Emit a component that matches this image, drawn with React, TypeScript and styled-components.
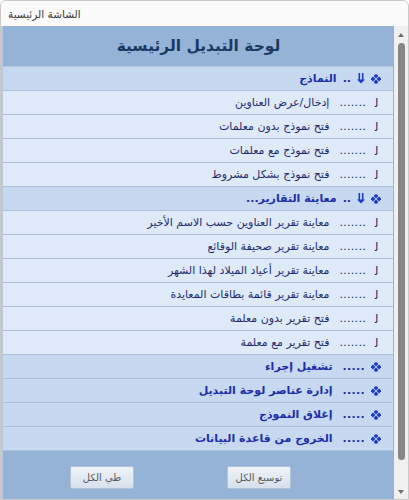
import React from 'react';
import styled, { createGlobalStyle } from 'styled-components';

const GlobalStyle = createGlobalStyle`
  html, body {
    margin: 0;
    padding: 0;
    background: #ffffff;
  }
  * {
    box-sizing: border-box;
  }
`;

const Window = styled.div`
  width: 409px;
  height: 500px;
  display: flex;
  flex-direction: column;
  border: 1px solid #c9c9c9;
  border-radius: 6px 6px 0 0;
  overflow: hidden;
  background: #f0f0f0;
  font-family: 'DejaVu Sans', Tahoma, sans-serif;
`;

const TitleBar = styled.div`
  height: 25px;
  flex: none;
  display: flex;
  align-items: center;
  padding-left: 7px;
  background: #fafafa;
  color: #3a3a3a;
  font-size: 10.5px;
`;

const Body = styled.div`
  flex: 1;
  display: flex;
  min-height: 0;
`;

const Panel = styled.div`
  flex: 1;
  display: flex;
  flex-direction: column;
  background: #95b3d7;
  border-left: 2px solid #b9c9dc;
`;

const Header = styled.div`
  height: 40px;
  flex: none;
  display: flex;
  align-items: center;
  justify-content: center;
  direction: rtl;
  color: #1b3a63;
  font-size: 15.5px;
  font-weight: bold;
`;

const List = styled.div`
  display: flex;
  flex-direction: column;
  border-top: 1px solid #b3c7df;
  margin-right: 1px;
  background: #dfeaf7;
`;

const Row = styled.div<{ $kind: 'section' | 'item' | 'command' }>`
  height: 24px;
  display: flex;
  align-items: center;
  direction: rtl;
  padding-right: 12px;
  gap: 6px;
  border-bottom: 1px solid #abc0da;
  background: ${(p) => (p.$kind === 'item' ? '#dfeaf8' : '#c6d9f1')};
  color: ${(p) => (p.$kind === 'item' ? '#1e2a6e' : '#1d2ea6')};
  font-size: 11px;
  font-weight: ${(p) => (p.$kind === 'item' ? 'normal' : 'bold')};
  white-space: nowrap;
`;

const Hook = styled.span`
  width: 9px;
  text-align: center;
  color: #1e2a6e;
  font-size: 12px;
`;

const Dots = styled.span`
  letter-spacing: 0.3px;
  margin-left: 4px;
`;

const Footer = styled.div`
  flex: 1;
  display: flex;
  align-items: center;
  direction: rtl;
  padding-right: 103px;
  gap: 93px;
  padding-top: 4px;
`;

const Button = styled.button`
  width: 64px;
  height: 23px;
  border: 1px solid #b4c3d8;
  border-radius: 2px;
  background: linear-gradient(#f0f4f9, #d6e0ec);
  color: #5a5a5a;
  font-family: 'DejaVu Sans', Tahoma, sans-serif;
  font-size: 10px;
  padding: 0;
`;

const ScrollTrack = styled.div`
  width: 14px;
  flex: none;
  display: flex;
  flex-direction: column;
  align-items: center;
  background: #f0f0f0;
  padding: 4px 0 2px;
`;

const Arrow = styled.div<{ $down?: boolean }>`
  width: 0;
  height: 0;
  border-left: 3.5px solid transparent;
  border-right: 3.5px solid transparent;
  ${(p) =>
    p.$down ? 'border-top: 4px solid #6e6e6e;' : 'border-bottom: 4px solid #6e6e6e;'}
  margin: 3px 0;
`;

const Thumb = styled.div`
  width: 7px;
  height: 417px;
  margin-top: 3px;
  border-radius: 4px;
  background: #878787;
`;

const Spacer = styled.div`
  flex: 1;
`;

const Diamond = () => (
  <svg width="10" height="10" viewBox="0 0 10 10">
    <g fill="#1f3cc8">
      <rect x="3.3" y="0.3" width="3.4" height="3.4" transform="rotate(45 5 2)" />
      <rect x="3.3" y="6.3" width="3.4" height="3.4" transform="rotate(45 5 8)" />
      <rect x="0.3" y="3.3" width="3.4" height="3.4" transform="rotate(45 2 5)" />
      <rect x="6.3" y="3.3" width="3.4" height="3.4" transform="rotate(45 8 5)" />
    </g>
  </svg>
);

const DownBars = () => (
  <svg width="8" height="11" viewBox="0 0 8 11">
    <g fill="#1f3cc8">
      <rect x="1.5" y="0" width="1.6" height="7" />
      <rect x="4.9" y="0" width="1.6" height="7" />
      <polygon points="0,6.5 8,6.5 4,10.5" />
    </g>
  </svg>
);

const sections = [
  {
    title: 'النماذج',
    items: [
      'إدخال/عرض العناوين',
      'فتح نموذج بدون معلمات',
      'فتح نموذج مع معلمات',
      'فتح نموذج بشكل مشروط',
    ],
  },
  {
    title: 'معاينة التقارير...',
    items: [
      'معاينة تقرير العناوين حسب الاسم الأخير',
      'معاينة تقرير صحيفة الوقائع',
      'معاينة تقرير أعياد الميلاد لهذا الشهر',
      'معاينة تقرير قائمة بطاقات المعايدة',
      'فتح تقرير بدون معلمة',
      'فتح تقرير مع معلمة',
    ],
  },
];

const commands = [
  'تشغيل إجراء',
  'إدارة عناصر لوحة التبديل',
  'إغلاق النموذج',
  'الخروج من قاعدة البيانات',
];

export default function App() {
  return (
    <>
      <GlobalStyle />
      <Window>
        <TitleBar>الشاشة الرئيسية</TitleBar>
        <Body>
          <Panel>
            <Header>لوحة التبديل الرئيسية</Header>
            <List>
              {sections.map((s) => (
                <React.Fragment key={s.title}>
                  <Row $kind="section">
                    <Diamond />
                    <DownBars />
                    <span>..</span>
                    <span>{s.title}</span>
                  </Row>
                  {s.items.map((it) => (
                    <Row $kind="item" key={it}>
                      <Hook>{'\uFEDF'}</Hook>
                      <Dots>.......</Dots>
                      <span>{it}</span>
                    </Row>
                  ))}
                </React.Fragment>
              ))}
              {commands.map((c) => (
                <Row $kind="command" key={c}>
                  <Diamond />
                  <Dots>.....</Dots>
                  <span>{c}</span>
                </Row>
              ))}
            </List>
            <Footer>
              <Button>توسيع الكل</Button>
              <Button>طي الكل</Button>
            </Footer>
          </Panel>
          <ScrollTrack>
            <Arrow />
            <Thumb />
            <Spacer />
            <Arrow $down />
          </ScrollTrack>
        </Body>
      </Window>
    </>
  );
}
